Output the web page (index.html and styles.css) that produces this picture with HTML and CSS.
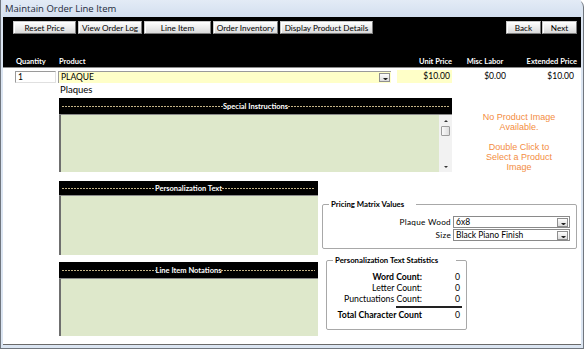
FILE: index.html
```html
<!DOCTYPE html>
<html lang="en">
<head>
  <meta charset="UTF-8">
  <title>Maintain Order Line Item</title>
  <link rel="stylesheet" href="styles.css">
</head>
<body>
  <div class="window">
    <div class="titlebar">Maintain Order Line Item</div>

    <div class="client">
      <!-- HEADER: toolbar + column headings -->
      <div class="header">
        <div class="toolbar">
          <div class="btn-group">
            <button class="btn btn-reset">Reset Price</button>
            <button class="btn btn-log">View Order Log</button>
            <button class="btn btn-line">Line Item</button>
            <button class="btn btn-inv">Order Inventory</button>
            <button class="btn btn-details">Display Product Details</button>
          </div>
          <div class="btn-group nav">
            <button class="btn btn-nav">Back</button>
            <button class="btn btn-nav">Next</button>
          </div>
        </div>
        <div class="colheads">
          <span class="ch-qty">Quantity</span>
          <span class="ch-product">Product</span>
          <span class="ch-unit">Unit Price</span>
          <span class="ch-misc">Misc Labor</span>
          <span class="ch-ext">Extended Price</span>
        </div>
      </div>

      <!-- LINE ROW -->
      <div class="line-row">
        <div class="field qty">1</div>
        <div class="combo product">
          <span class="combo-text">PLAQUE</span>
          <span class="drop"></span>
        </div>
        <div class="field unit">$10.00</div>
        <div class="misc">$0.00</div>
        <div class="ext">$10.00</div>
      </div>
      <div class="category">Plaques</div>

      <!-- SPECIAL INSTRUCTIONS + IMAGE NOTE -->
      <div class="upper">
        <div class="panel special">
          <div class="panel-head">
            <span class="dash"></span><span class="panel-title">Special Instructions</span><span class="dash"></span>
          </div>
          <div class="panel-body">
            <div class="area"></div>
            <div class="vscroll">
              <span class="arrow up"></span>
              <span class="thumb"></span>
              <span class="arrow down"></span>
            </div>
          </div>
        </div>
        <div class="note">
          <p>No Product Image<br>Available.</p>
          <p>Double Click to<br>Select a Product<br>Image</p>
        </div>
      </div>

      <!-- LOWER -->
      <div class="lower">
        <div class="left-col">
          <div class="panel personal">
            <div class="panel-head">
              <span class="dash"></span><span class="panel-title">Personalization Text</span><span class="dash"></span>
            </div>
            <div class="panel-body"><div class="area"></div></div>
          </div>
          <div class="panel notations">
            <div class="panel-head">
              <span class="dash"></span><span class="panel-title">Line Item Notations</span><span class="dash"></span>
            </div>
            <div class="panel-body"><div class="area"></div></div>
          </div>
        </div>

        <div class="right-col">
          <fieldset class="group pricing">
            <legend>Pricing Matrix Values</legend>
            <div class="prow">
              <span class="plabel">Plaque Wood</span>
              <div class="combo pick"><span class="combo-text">6x8</span><span class="drop"></span></div>
            </div>
            <div class="prow">
              <span class="plabel">Size</span>
              <div class="combo pick"><span class="combo-text">Black Piano Finish</span><span class="drop"></span></div>
            </div>
          </fieldset>

          <fieldset class="group stats">
            <legend>Personalization Text Statistics</legend>
            <div class="stat-grid">
              <span class="slabel bold">Word Count:</span><span class="sval">0</span>
              <span class="slabel">Letter Count:</span><span class="sval">0</span>
              <span class="slabel">Punctuations Count:</span><span class="sval">0</span>
              <div class="sum-line"></div>
              <span class="slabel bold">Total Character Count</span><span class="sval">0</span>
            </div>
          </fieldset>
        </div>
      </div>
    </div>
  </div>
</body>
</html>
```

FILE: styles.css
```css
/* Global */
* {
  box-sizing: border-box;
}
body {
  margin: 0;
  background: #fff;
  font-family: Lato, "Liberation Sans", sans-serif;
  font-size: 8.5px;
  color: #000;
}

/* WINDOW FRAME */
.window {
  width: 584px;
  height: 349px;
  background: #dbe5f2;
  border: 1px solid #70767e;
  border-top: none;
  border-radius: 0 7px 0 0;
  padding: 0 2px 3px;
  display: flex;
  flex-direction: column;
}
.titlebar {
  height: 17px;
  line-height: 17px;
  padding-left: 2px;
  font-family: "Open Sans", sans-serif;
  font-size: 9.5px;
  color: #1e2a3a;
  background: linear-gradient(#e3ebf6, #d3dfef);
}
.client {
  flex: 1;
  background: #fff;
  border-bottom: 1px solid #6a6a6a;
  display: flex;
  flex-direction: column;
}

/* HEADER */
.header {
  height: 51px;
  background: #000;
  border-bottom: 1px solid #8a8a8a;
  color: #fff;
  display: flex;
  flex-direction: column;
  justify-content: space-between;
}
.toolbar {
  display: flex;
  justify-content: space-between;
  padding: 4px 4px 0 10px;
}
.btn-group {
  display: flex;
  gap: 2px;
}
.btn-group.nav {
  gap: 1px;
}
.btn {
  height: 13px;
  padding: 0;
  font-family: Lato, sans-serif;
  font-size: 8.2px;
  color: #000;
  white-space: nowrap;
  background: linear-gradient(#ffffff, #e9e9e9 60%, #d9d9d9);
  border: 1px solid #7c7c7c;
  border-top-color: #c8c8c8;
  border-left-color: #c8c8c8;
  box-shadow: inset 1px 1px 0 #fff;
}
.btn-reset { width: 63px; }
.btn-log { width: 64px; }
.btn-line { width: 67px; }
.btn-inv { width: 65px; }
.btn-details { width: 93px; }
.btn-nav { width: 35px; }

.colheads {
  display: flex;
  height: 10px;
  line-height: 10px;
  font-size: 7.5px;
  font-weight: bold;
  white-space: nowrap;
  padding-left: 13px;
}
.ch-qty { width: 43px; }
.ch-product { width: 338px; }
.ch-unit { width: 55px; text-align: right; }
.ch-misc { width: 66px; text-align: center; }
.ch-ext { width: 59px; text-align: right; }

/* LINE ROW */
.line-row {
  display: flex;
  align-items: center;
  height: 13px;
  margin-top: 2px;
  line-height: 11px;
}
.field {
  height: 12px;
  padding: 0 2px;
}
.qty {
  width: 41px;
  margin-left: 12px;
  border: 1px solid #9a9a9a;
  border-right-color: #e0e0e0;
  border-bottom-color: #e0e0e0;
}
.combo {
  display: flex;
  align-items: center;
  height: 12px;
}
.combo-text {
  flex: 1;
  padding-left: 2px;
}
.product {
  width: 333px;
  margin-left: 2px;
  background: #ffffc8;
  border-top: 1px solid #9a9a9a;
  border-left: 1px solid #9a9a9a;
  padding-right: 1px;
}
.drop {
  width: 11px;
  height: 9px;
  border: 1px solid #8f8f8f;
  background: linear-gradient(#fdfdfd, #dcdcdc);
  position: relative;
}
.drop::after {
  content: "";
  position: absolute;
  left: 3px;
  top: 4px;
  border-left: 2px solid transparent;
  border-right: 2px solid transparent;
  border-top: 2px solid #222;
  width: 1px;
}
.unit {
  width: 55px;
  margin-left: 6px;
  background: #ffffc8;
  text-align: right;
  height: 13px;
  line-height: 13px;
}
.misc {
  width: 86px;
  text-align: center;
}
.ext {
  width: 36px;
  text-align: right;
}
.category {
  margin: 2px 0 0 57px;
  height: 10px;
  line-height: 10px;
  font-size: 9.5px;
}

/* PANELS */
.upper {
  display: flex;
  height: 74px;
  margin-top: 3px;
  padding-left: 56px;
}
.panel-head {
  height: 17px;
  background: #000;
  border-bottom: 1px solid #8a8a8a;
  display: flex;
  align-items: center;
  padding: 0 3px;
  font-size: 7.5px;
}
.dash {
  flex: 1;
  height: 1px;
  background: repeating-linear-gradient(90deg, #c4b387 0 2px, transparent 2px 3px);
}
.panel-title {
  color: #fff;
  font-weight: bold;
}
.panel-body {
  display: flex;
  background: #dee8cb;
  border-left: 2px solid #6f6f6f;
}
.area {
  flex: 1;
}
.special {
  width: 393px;
}
.special .panel-body {
  height: 57px;
}
.vscroll {
  width: 13px;
  background: #f2f2f2;
  display: flex;
  flex-direction: column;
  align-items: center;
  padding: 5px 0 4px;
}
.arrow {
  width: 0;
  height: 0;
  border-left: 2px solid transparent;
  border-right: 2px solid transparent;
}
.arrow.up { border-bottom: 2px solid #333; }
.arrow.down { border-top: 2px solid #333; margin-top: auto; }
.thumb {
  width: 9px;
  height: 10px;
  margin-top: 4px;
  border: 1px solid #9c9c9c;
  border-radius: 1px;
  background: linear-gradient(90deg, #fafafa, #dedede);
}
.note {
  flex: 1;
  padding: 14px 0 0 5px;
  text-align: center;
  font-family: "Liberation Sans", Arial, sans-serif;
  font-size: 9px;
  line-height: 10px;
  color: #f38d3f;
}
.note p {
  margin: 0 0 10px;
}
.note p:last-child {
  margin-bottom: 0;
}

.lower {
  display: flex;
  margin-top: 9px;
  padding-left: 56px;
}
.left-col {
  width: 259px;
  display: flex;
  flex-direction: column;
}
.personal .panel-head { height: 15px; }
.personal .panel-body { height: 59px; }
.notations { margin-top: 7px; }
.notations .panel-head { height: 17px; }
.notations .panel-body { height: 57px; }

/* GROUP BOXES */
.right-col {
  margin-left: 4px;
  display: flex;
  flex-direction: column;
}
.group {
  margin: 0;
  border: 1px solid #a8a8a8;
  border-radius: 2px;
  padding: 0 6px 6px 0;
}
.group legend {
  font-size: 7.8px;
  font-weight: bold;
  line-height: 10px;
  padding: 0 12px 0 2px;
  margin-left: 6px;
}
.pricing {
  width: 255px;
  margin-top: 18px;
  padding-top: 7px;
}
.prow {
  display: flex;
  justify-content: flex-end;
  align-items: center;
  height: 12px;
  margin-bottom: 1px;
}
.plabel {
  margin-right: 2px;
  font-size: 8.2px;
  letter-spacing: 0.3px;
}
.pick {
  width: 117px;
  background: #fff;
  border: 1px solid #8a8a8a;
  padding-right: 1px;
}
.stats {
  width: 141px;
  margin: 6px 0 0 4px;
  padding: 6px 6px 9px 0;
}
.stats legend {
  padding-right: 18px;
}
.stat-grid {
  display: grid;
  grid-template-columns: 95px 1fr;
  line-height: 11px;
  font-size: 8.7px;
}
.slabel {
  text-align: right;
  white-space: nowrap;
}
.sval {
  text-align: right;
}
.bold {
  font-weight: bold;
}
.sum-line {
  grid-column: 1 / -1;
  justify-self: end;
  width: 66px;
  height: 2px;
  margin: 2px -2px 1px 0;
  background: #222;
}
```
